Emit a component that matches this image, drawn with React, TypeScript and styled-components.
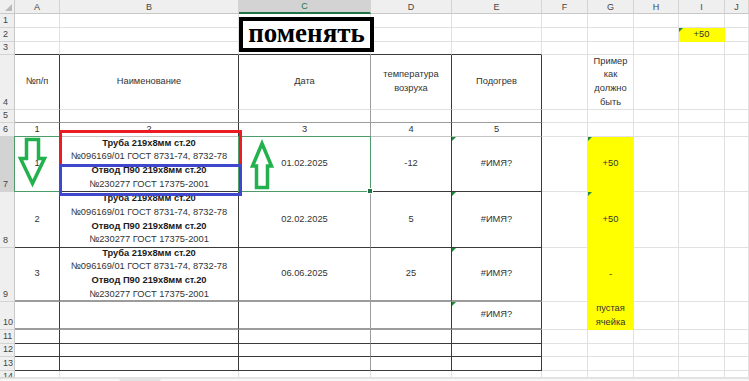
import React from 'react';
import styled, { createGlobalStyle, css } from 'styled-components';

const GlobalStyle = createGlobalStyle`
  html, body {
    margin: 0;
    padding: 0;
    background: #ffffff;
    overflow: hidden;
  }
  body {
    font-family: 'Liberation Sans', Arial, sans-serif;
  }
`;

const YELLOW = '#ffff00';
const GREEN = '#217346';
const LINES: Record<string, string> = {
  grid: '#e1e1e1',
  soft: '#c4c4c4',
  mid: '#9c9c9c',
  dark: '#3a3a3a',
};

const COLS = [15, 45, 179, 132, 81, 90, 46, 46, 45, 46, 24];
const ROWS = [14, 14, 14, 13, 55, 13, 14, 55, 56, 54, 28, 14, 13, 14, 7];
const LETTERS = ['', 'A', 'B', 'C', 'D', 'E', 'F', 'G', 'H', 'I', 'J'];

type Piece = { t: string; b?: boolean };
type Spec = { lines: Piece[]; bg?: string; flag?: boolean };

const plain = (...t: string[]): Spec => ({ lines: t.map(x => ({ t: x })) });

const product: Piece[] = [
  { t: 'Труба 219х8мм ст.20', b: true },
  { t: '№096169/01 ГОСТ 8731-74, 8732-78' },
  { t: 'Отвод П90 219х8мм ст.20', b: true },
  { t: '№230277 ГОСТ 17375-2001' },
];

const cells: Record<string, Spec> = {
  I2: { lines: [{ t: '+50' }], bg: YELLOW, flag: true },
  A4: plain('№п/п'),
  B4: plain('Наименование'),
  C4: plain('Дата'),
  D4: plain('температура', 'возруха'),
  E4: plain('Подогрев'),
  G4: plain('Пример', 'как', 'должно', 'быть'),
  A6: plain('1'),
  B6: plain('2'),
  C6: plain('3'),
  D6: plain('4'),
  E6: plain('5'),
  A7: plain('1'),
  B7: { lines: product },
  C7: plain('01.02.2025'),
  D7: plain('-12'),
  E7: { ...plain('#ИМЯ?'), flag: true },
  G7: { ...plain('+50'), bg: YELLOW, flag: true },
  A8: plain('2'),
  B8: { lines: product },
  C8: plain('02.02.2025'),
  D8: plain('5'),
  E8: { ...plain('#ИМЯ?'), flag: true },
  G8: { ...plain('+50'), bg: YELLOW, flag: true },
  A9: plain('3'),
  B9: { lines: product },
  C9: plain('06.06.2025'),
  D9: plain('25'),
  E9: { ...plain('#ИМЯ?'), flag: true },
  G9: { ...plain('-'), bg: YELLOW },
  E10: { ...plain('#ИМЯ?'), flag: true },
  G10: { ...plain('пустая', 'ячейка'), bg: YELLOW },
};

const TABLE_RIGHT = ['dark', 'dark', 'mid', 'dark', 'dark'];
const TABLE_BOTTOM: Record<number, string> = {
  3: 'dark', 4: 'grid', 5: 'mid', 6: 'soft', 7: 'dark', 8: 'dark',
  9: 'mid', 10: 'mid', 11: 'dark', 12: 'dark', 13: 'dark',
};

const Page = styled.div`
  width: 749px;
  height: 381px;
  display: flex;
  flex-direction: column;
  overflow: hidden;
`;

const Sheet = styled.div`
  position: relative;
  display: grid;
  grid-template-columns: ${COLS.map(c => `${c}px`).join(' ')};
  grid-template-rows: ${ROWS.map(r => `${r}px`).join(' ')};
`;

const Corner = styled.div`
  position: relative;
  box-sizing: border-box;
  background: #efefef;
  border-right: 1px solid #c8c8c8;
  border-bottom: 1px solid #c8c8c8;
  &::after {
    content: '';
    position: absolute;
    right: 2px;
    bottom: 2px;
    border-left: 7px solid transparent;
    border-bottom: 7px solid #b9b9b9;
  }
`;

const ColHead = styled.div<{ $active?: boolean }>`
  box-sizing: border-box;
  display: flex;
  align-items: center;
  justify-content: center;
  background: ${p => (p.$active ? '#d3d3d3' : '#efefef')};
  border-right: 1px solid #d4d4d4;
  border-bottom: ${p => (p.$active ? `2px solid ${GREEN}` : '1px solid #c8c8c8')};
  color: ${p => (p.$active ? GREEN : '#444')};
  font-size: 9px;
  line-height: 12px;
`;

const RowHead = styled.div<{ $active?: boolean; $top?: boolean }>`
  box-sizing: border-box;
  display: flex;
  align-items: ${p => (p.$top ? 'flex-start' : 'flex-end')};
  padding: 0 0 1px 3px;
  overflow: hidden;
  background: ${p => (p.$active ? '#d3d3d3' : '#efefef')};
  border-right: 1px solid ${p => (p.$active ? GREEN : '#c8c8c8')};
  border-bottom: 1px solid #d4d4d4;
  color: #444;
  font-size: 9px;
  line-height: 11px;
`;

const Cell = styled.div<{
  $right: string;
  $bottom: string;
  $bw: number;
  $bg?: string;
  $flag?: boolean;
  $selected?: boolean;
}>`
  position: relative;
  box-sizing: border-box;
  display: flex;
  flex-direction: column;
  align-items: center;
  justify-content: center;
  background: ${p => p.$bg ?? '#fff'};
  border-right: 1px solid ${p => p.$right};
  border-bottom: ${p => p.$bw}px solid ${p => p.$bottom};
  color: #333;
  font-size: 9.3px;
  line-height: 13.6px;
  white-space: nowrap;
  ${p =>
    p.$flag &&
    css`
      &::before {
        content: '';
        position: absolute;
        left: 0;
        top: 0;
        border-top: 4px solid #1f8a3c;
        border-right: 4px solid transparent;
      }
    `}
  ${p =>
    p.$selected &&
    css`
      &::after {
        content: '';
        position: absolute;
        left: -1px;
        top: -1px;
        right: -1px;
        bottom: -1px;
        border: 1px solid #4f9a6a;
        z-index: 2;
        pointer-events: none;
      }
    `}
`;

const Text = styled.span<{ $bold?: boolean }>`
  font-weight: ${p => (p.$bold ? 700 : 400)};
  color: ${p => (p.$bold ? '#1a1a1a' : '#333')};
`;

const Handle = styled.div`
  position: absolute;
  right: -3px;
  bottom: -3px;
  width: 4px;
  height: 4px;
  background: ${GREEN};
  border: 1px solid #fff;
  z-index: 3;
`;

const TitleBox = styled.div`
  position: absolute;
  left: 239px;
  top: 17px;
  width: 135px;
  height: 35px;
  box-sizing: border-box;
  border: 4px solid #000;
  background: #fff;
  display: flex;
  align-items: center;
  justify-content: center;
  font-family: 'Liberation Serif', 'Times New Roman', serif;
  font-weight: 700;
  font-size: 27px;
  line-height: 1;
  color: #000;
  padding-bottom: 2px;
  z-index: 4;
`;

const Frame = styled.div<{ $color: string; $left: number; $top: number; $w: number; $h: number }>`
  position: absolute;
  left: ${p => p.$left}px;
  top: ${p => p.$top}px;
  width: ${p => p.$w}px;
  height: ${p => p.$h}px;
  box-sizing: border-box;
  border: 3px solid ${p => p.$color};
  z-index: 4;
  pointer-events: none;
`;

const ArrowLayer = styled.svg`
  position: absolute;
  left: 0;
  top: 0;
  width: 749px;
  height: 378px;
  z-index: 5;
  pointer-events: none;
`;

const BottomBar = styled.div`
  flex: 1;
  display: flex;
  gap: 40px;
  padding-top: 1px;
  background: #e4e4e4;
`;

const BarTab = styled.div<{ $w?: number }>`
  ${p => (p.$w ? `width: ${p.$w}px;` : 'flex: 1;')}
  background: #f7f7f7;
  border-radius: 3px 3px 0 0;
`;

function borderFor(row: number, col: number) {
  const inTable = col >= 1 && col <= 5;
  const right = inTable && row >= 4 && row <= 13 ? TABLE_RIGHT[col - 1] : 'grid';
  const bottom = inTable && TABLE_BOTTOM[row] ? TABLE_BOTTOM[row] : 'grid';
  return { right, bottom };
}

export default function App() {
  const grid: React.ReactNode[] = [];

  ROWS.forEach((_, r) => {
    LETTERS.forEach((L, c) => {
      const key = `${r}-${c}`;
      if (r === 0) {
        grid.push(c === 0 ? <Corner key={key} /> : <ColHead key={key} $active={L === 'C'}>{L}</ColHead>);
        return;
      }
      if (c === 0) {
        grid.push(
          <RowHead key={key} $active={r === 7} $top={r === 14}>
            {r}
          </RowHead>
        );
        return;
      }
      const spec = cells[`${L}${r}`];
      const b = borderFor(r, c);
      const bg = spec?.bg;
      const rightColor = bg && b.right === 'grid' ? bg : LINES[b.right];
      const bottomColor = bg && b.bottom === 'grid' ? bg : LINES[b.bottom];
      const bw = b.bottom === 'mid' && (r === 9 || r === 10) ? 2 : 1;
      const selected = r === 7 && (L === 'A' || L === 'C');
      grid.push(
        <Cell
          key={key}
          $right={rightColor}
          $bottom={bottomColor}
          $bw={bw}
          $bg={bg}
          $flag={spec?.flag}
          $selected={selected}
        >
          {spec?.lines.map((p, i) => (
            <Text key={i} $bold={p.b}>
              {p.t}
            </Text>
          ))}
          {r === 7 && L === 'C' && <Handle />}
        </Cell>
      );
    });
  });

  return (
    <>
      <GlobalStyle />
      <Page>
        <Sheet>
          {grid}
          <TitleBox>поменять</TitleBox>
          <Frame $color="#ed1c24" $left={59} $top={130} $w={183} $h={37} />
          <Frame $color="#3f48cc" $left={59} $top={164} $w={183} $h={32} />
          <ArrowLayer viewBox="0 0 749 378">
            <path
              d="M26.5 139.5 H38.5 V158.5 H44.5 L32.5 183.5 L20.5 158.5 H26.5 Z"
              fill="none"
              stroke="#22b14c"
              strokeWidth="3.5"
              strokeLinejoin="miter"
            />
            <path
              d="M262 143.5 L271.5 166 H267.5 V187.5 H256.5 V166 H252.5 Z"
              fill="none"
              stroke="#22b14c"
              strokeWidth="3.5"
              strokeLinejoin="miter"
            />
          </ArrowLayer>
        </Sheet>
        <BottomBar>
          <BarTab $w={120} />
          <BarTab />
        </BottomBar>
      </Page>
    </>
  );
}
